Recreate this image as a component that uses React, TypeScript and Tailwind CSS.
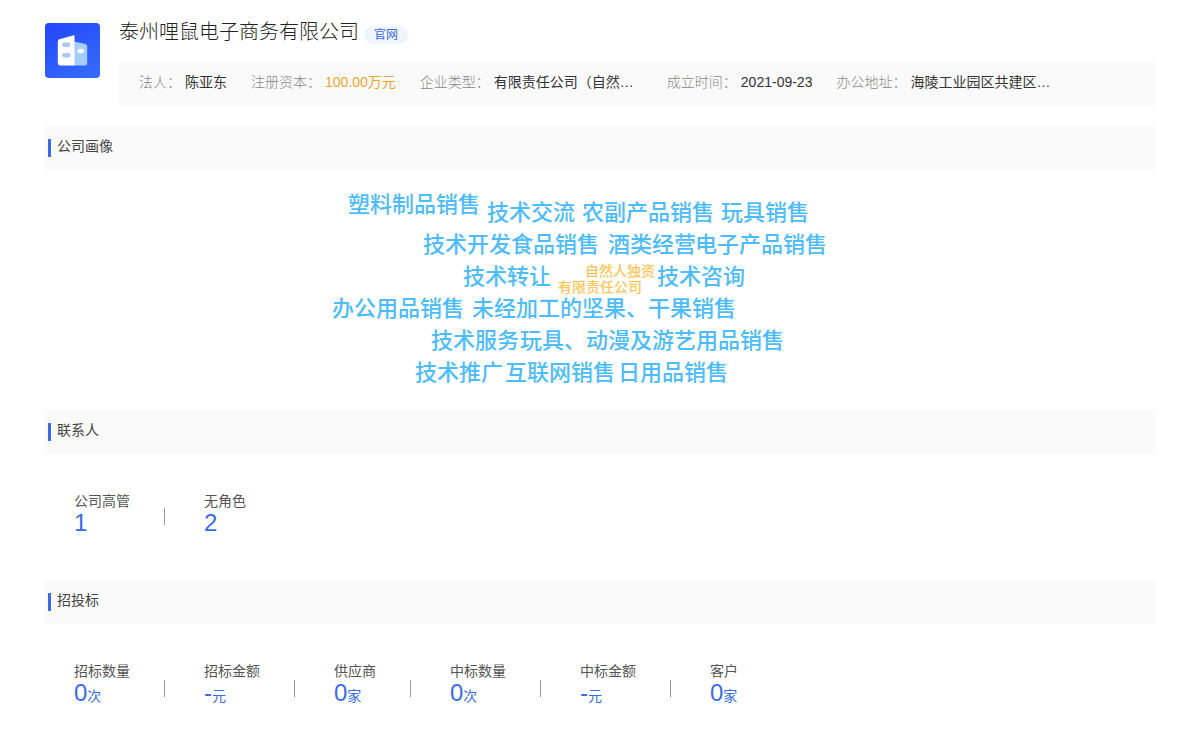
type InfoItem = {
  label: string;
  value: string;
  highlight?: boolean;
  fixed?: boolean;
};

type Stat = {
  label: string;
  value: string;
  unit?: string;
};

type CloudWord = {
  text: string;
  x: number;
  y: number;
  small?: boolean;
};

const companyInfo: InfoItem[] = [
  { label: "法人：", value: "陈亚东" },
  { label: "注册资本：", value: "100.00万元", highlight: true },
  { label: "企业类型：", value: "有限责任公司（自然…", fixed: true },
  { label: "成立时间：", value: "2021-09-23" },
  { label: "办公地址：", value: "海陵工业园区共建区…", fixed: true },
];

const contacts: Stat[] = [
  { label: "公司高管", value: "1" },
  { label: "无角色", value: "2" },
];

const bids: Stat[] = [
  { label: "招标数量", value: "0", unit: "次" },
  { label: "招标金额", value: "-", unit: "元" },
  { label: "供应商", value: "0", unit: "家" },
  { label: "中标数量", value: "0", unit: "次" },
  { label: "中标金额", value: "-", unit: "元" },
  { label: "客户", value: "0", unit: "家" },
];

// x is the left edge, y the vertical centre of each word
const cloudWords: CloudWord[] = [
  { text: "塑料制品销售", x: 28, y: 35 },
  { text: "技术交流", x: 167, y: 43 },
  { text: "农副产品销售", x: 262, y: 43 },
  { text: "玩具销售", x: 401, y: 43 },
  { text: "技术开发", x: 103, y: 75 },
  { text: "食品销售", x: 191, y: 75 },
  { text: "酒类经营", x: 288, y: 75 },
  { text: "电子产品销售", x: 375, y: 75 },
  { text: "技术转让", x: 143, y: 107 },
  { text: "自然人独资", x: 265, y: 101, small: true },
  { text: "有限责任公司", x: 238, y: 117, small: true },
  { text: "技术咨询", x: 337, y: 107 },
  { text: "办公用品销售", x: 12, y: 139 },
  { text: "未经加工的坚果、干果销售", x: 152, y: 139 },
  { text: "技术服务", x: 111, y: 171 },
  { text: "玩具、动漫及游艺用品销售", x: 200, y: 171 },
  { text: "技术推广", x: 95, y: 203 },
  { text: "互联网销售", x: 185, y: 203 },
  { text: "日用品销售", x: 298, y: 203 },
];

const CompanyLogo = () => (
  <svg viewBox="0 0 55 55" className="w-[55px] h-[55px] shrink-0" aria-hidden="true">
    <defs>
      <linearGradient id="logo-bg" x1="0" y1="0" x2="0.6" y2="1">
        <stop offset="0" stopColor="#2345fb" />
        <stop offset="1" stopColor="#3268fb" />
      </linearGradient>
    </defs>
    <rect width="55" height="55" rx="4" fill="url(#logo-bg)" />
    <path d="M29 18.5 40.5 21a2 2 0 0 1 1.7 2V40.500a2 2 0 0 1-2 2H29Z" fill="#a4cdfb" />
    <path d="M14.500 16.200 29.500 12V42.500H15a2.200 2.200 0 0 1-2.200-2.200V18.400a2.200 2.200 0 0 1 1.700-2.200Z" fill="#fff" />
    <rect x="17" y="19.500" width="8.500" height="4.600" rx="2.300" fill="#a9c8f8" />
    <rect x="17" y="30" width="8.500" height="4.600" rx="2.300" fill="#a9c8f8" />
    <rect x="32.500" y="25.800" width="6.500" height="4.400" rx="2.200" fill="#fff" />
  </svg>
);

const SectionTitle = ({ title }: { title: string }) => (
  <div className="flex items-start h-11 bg-[#fafafa] pl-1 pt-[13px]">
    <span className="w-[3px] h-[18px] bg-[#3a6ae4]" />
    <h2 className="ml-1.5 -mt-[3px] text-sm leading-5 text-[#444]">{title}</h2>
  </div>
);

const StatRow = ({ stats }: { stats: Stat[] }) => (
  <dl className="flex flex-wrap pl-[30px]">
    {stats.map((stat, index) => (
      <div key={stat.label} className="flex">
        {index > 0 && (
          <span className="self-center ml-[34px] mr-[39px] w-px h-[17px] mt-[7px] bg-[#999]" />
        )}
        <div>
          <dt className="text-sm leading-5 text-[#555]">{stat.label}</dt>
          <dd className="flex items-baseline text-2xl leading-6 text-[#3a6ae4]">
            {stat.value}
            {stat.unit && <span className="text-sm leading-6">{stat.unit}</span>}
          </dd>
        </div>
      </div>
    ))}
  </dl>
);

const WordCloud = () => (
  <div className="relative w-[560px] h-[240px] mx-auto">
    {cloudWords.map((word) => (
      <span
        key={word.text}
        className={`absolute -translate-y-1/2 whitespace-nowrap font-medium ${
          word.small
            ? "text-sm leading-4 text-[#fac858]"
            : "text-[22px] leading-8 text-[#4fbcfa]"
        }`}
        style={{ left: word.x, top: word.y }}
      >
        {word.text}
      </span>
    ))}
  </div>
);

export default function App() {
  return (
    <main
      lang="zh-CN"
      className="min-h-screen bg-white px-11 pt-[18px] pb-10 font-['Liberation_Sans','Noto_Sans_CJK_SC',sans-serif]"
    >
      <header className="flex items-start gap-5">
        <div className="pt-[5px] pl-px -mr-px">
          <CompanyLogo />
        </div>
        <div className="flex-1 min-w-0">
          <div className="flex items-center gap-[5px]">
            <h1 className="text-xl leading-7 font-light text-[#222]">泰州哩鼠电子商务有限公司</h1>
            <a
              href="#"
              className="mt-1.5 px-2.5 rounded-full bg-[#f0f5fd] text-xs leading-[18px] text-[#3a6ae4]"
            >
              官网
            </a>
          </div>
          <dl className="mt-4 flex flex-wrap gap-x-6 bg-[#fafafa] px-5 pt-2.5 pb-3.5 text-sm leading-5">
            {companyInfo.map((item) => (
              <div key={item.label} className="flex gap-1">
                <dt className="font-light text-[#888]">{item.label}</dt>
                <dd
                  className={`truncate ${item.fixed ? "w-[149px]" : ""} ${
                    item.highlight ? "text-[#eba62f]" : "text-[#333]"
                  }`}
                >
                  {item.value}
                </dd>
              </div>
            ))}
          </dl>
        </div>
      </header>

      <section className="mt-5">
        <SectionTitle title="公司画像" />
        <WordCloud />
      </section>

      <section>
        <SectionTitle title="联系人" />
        <div className="pt-[37px] pb-[45px]">
          <StatRow stats={contacts} />
        </div>
      </section>

      <section>
        <SectionTitle title="招投标" />
        <div className="pt-[37px]">
          <StatRow stats={bids} />
        </div>
      </section>
    </main>
  );
}
